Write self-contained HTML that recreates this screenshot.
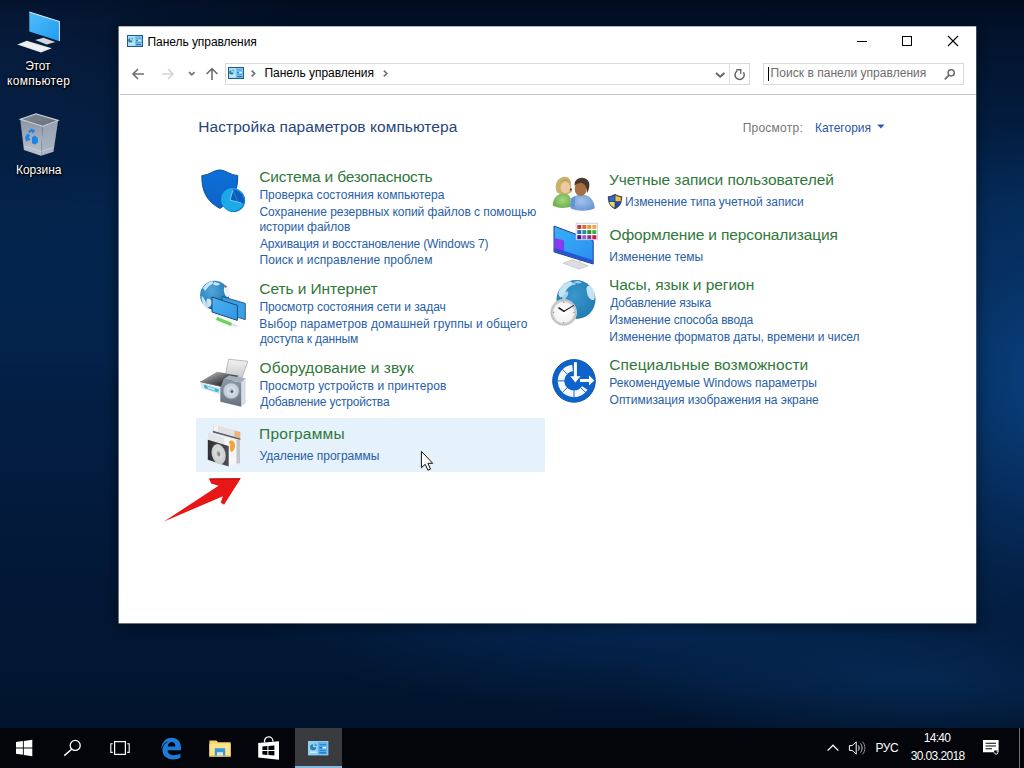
<!DOCTYPE html>
<html lang="ru">
<head>
<meta charset="utf-8">
<title>Панель управления</title>
<style>
*{box-sizing:border-box;margin:0;padding:0}
html,body{width:1024px;height:768px;overflow:hidden}
body{position:relative;font-family:"Liberation Sans",sans-serif;font-size:12px;color:#000;background:#06193a}
.a{position:absolute}
.t{position:absolute;white-space:nowrap;line-height:1}
svg{position:absolute;overflow:visible}
#desk{position:absolute;left:0;top:0;width:1024px;height:768px;
background:
radial-gradient(ellipse 300px 200px at 10px 70px, rgba(9,34,72,.6), rgba(7,30,66,.3) 55%, rgba(5,26,58,0) 100%),
radial-gradient(ellipse 240px 260px at 1055px 385px, rgba(10,68,132,.92), rgba(8,56,112,.55) 52%, rgba(5,40,86,0) 100%),
radial-gradient(ellipse 300px 70px at 920px 680px, rgba(8,54,108,.55), rgba(6,46,96,0) 100%),
radial-gradient(ellipse 400px 95px at 660px 618px, rgba(5,46,98,.7), rgba(4,38,82,0) 100%),
linear-gradient(180deg,#020c1f 0px,#02122a 30px,#031b3c 110px,#03254e 210px,#03234b 350px,#031e43 395px,#031a3b 520px,#02152f 700px,#02122a 768px)}
#win{position:absolute;left:118px;top:26px;width:858px;height:597px;background:#fff;
border:1px solid #49688f;box-shadow:0 5px 20px rgba(0,0,0,.42)}
#sep{position:absolute;left:120px;top:94px;width:856px;height:1px;background:#c6c6c6}
.box{position:absolute;border:1px solid #d9d9d9;background:#fff}
#hl{position:absolute;left:196px;top:418px;width:349px;height:54px;background:#e5f1fb}
#task{position:absolute;left:0;top:728px;width:1024px;height:40px;background:#03050a}
#act{position:absolute;left:295px;top:728px;width:47px;height:40px;background:#393b3e}
#actl{position:absolute;left:295px;top:766px;width:47px;height:2px;background:#86b9e2}
.dl{color:#fff;text-shadow:0 1px 2px #000,0 0 3px #000,1px 1px 1px #000}

</style>
</head>
<body>
<div id="desk"></div>
<svg id="dicons" style="left:0;top:0" width="1024" height="768">
<defs>
<linearGradient id="gPc" x1="0" y1="0" x2="1" y2="1"><stop offset="0" stop-color="#52bdf8"/><stop offset="1" stop-color="#1e9cf0"/></linearGradient>
<linearGradient id="gBinL" x1="0" y1="0" x2="0" y2="1"><stop offset="0" stop-color="#8995a7"/><stop offset="1" stop-color="#bcc3ce"/></linearGradient>
<linearGradient id="gBinR" x1="0" y1="0" x2="0" y2="1"><stop offset="0" stop-color="#97a2b3"/><stop offset="1" stop-color="#adb5c1"/></linearGradient>
<linearGradient id="gBinT" x1="0" y1="0" x2="1" y2="1"><stop offset="0" stop-color="#838b96"/><stop offset="1" stop-color="#656d78"/></linearGradient>
<filter id="db"><feGaussianBlur stdDeviation="0.35"/></filter>
</defs>
<!-- This PC -->
<g filter="url(#db)">
<path d="M28.500 11.400L60.300 21.300V41.800L28.500 31.800Z" fill="#0a1526" opacity=".55"/>
<path d="M29.300 12L59.750 21.600V41.200L29.300 31.600Z" fill="url(#gPc)"/>
<path d="M29.300 12L59.750 21.600" stroke="#dff1fc" stroke-width="1"/>
<path d="M59.400 21.600V41" stroke="#cfe6f6" stroke-width="1"/>
<path d="M35.200 39.900L43.500 37.800L55.200 42L46.800 44.500Z" fill="#d2d6de"/>
<path d="M17.250 44.500L26.800 40.750L51.800 48.250L41 52.400Z" fill="#e6e8ec"/>
<path d="M21 44.600L27 42.400L48 48.600L41.200 51Z" fill="#f4f5f7" opacity=".7"/>
</g>
<!-- Recycle bin -->
<g filter="url(#db)">
<path d="M20.200 119.200L42.700 126.250L41 155.800L23.900 150Z" fill="url(#gBinL)"/>
<path d="M42.700 126.250L58.100 120.400L53.500 151.700L41 155.800Z" fill="url(#gBinR)"/>
<path d="M20.200 119.200L36 113.750L58.100 120.400L42.700 126.250Z" fill="url(#gBinT)" stroke="#cfd4dc" stroke-width="1.100"/>
<path d="M24.500 146L41.200 151.500L53 147.600" fill="none" stroke="#d9dde3" stroke-width="1" opacity=".6"/>
<g fill="#1c84e4">
<path d="M28.300 131.200L31.600 128.400L35.200 130.600L33 133.400L31 131.600L29.600 133.400Z"/>
<path d="M25 137.200L27.400 133.400L30 135.200L28.600 137.600L30.600 139.600L26.200 141.400Z"/>
<path d="M32 143.200V137.400L34.600 135.200L37.800 138.200L38 142.600L34.800 144.400Z"/>
</g>
</g>
</svg>
<svg id="winsvg" style="left:0;top:0" width="1024" height="768"><defs><filter id="wsh" x="-5%" y="-5%" width="110%" height="112%"><feGaussianBlur stdDeviation="6"/></filter></defs><rect x="116" y="27" width="862" height="600" fill="#000" opacity=".38" filter="url(#wsh)"/><rect x="118.600" y="26.300" width="857.650" height="597.100" fill="#fff"/></svg>
<div id="sep"></div>
<div class="box" style="left:225px;top:63px;width:525px;height:22px"></div>
<div class="a" style="left:729px;top:64px;width:1px;height:20px;background:#e2e2e2"></div>
<div class="box" style="left:763px;top:63px;width:201px;height:22px"></div>
<div class="a" style="left:768px;top:67px;width:1px;height:14px;background:#000"></div>
<div id="hl"></div>
<svg id="chrome" style="left:0;top:0" width="1024" height="768">
<defs>
<g id="cpi">
 <rect x="0.5" y="0.5" width="15" height="11" fill="#a9def3" stroke="#1d5c8e" stroke-width="1"/>
 <rect x="8" y="1" width="7" height="10" fill="#7cc6f2"/>
 <path d="M3.2 3.2a2.2 2.2 0 1 0 2.3 2.2h-2.3z" fill="#2f7d9d"/>
 <path d="M4.6 2.4a2 2 0 0 1 1.8 1.9h-1.8z" fill="#4b96b2"/>
 <rect x="2" y="8.4" width="5" height="1" fill="#d9f3fb"/>
 <rect x="9" y="2.5" width="5" height="1" fill="#4a9fdc"/>
 <rect x="9" y="4.8" width="2" height="1.4" fill="#2c7fc4"/>
 <rect x="11.2" y="4.9" width="2.6" height="1.2" fill="#eaf8ff"/>
 <rect x="9" y="7" width="5" height="1" fill="#4a9fdc"/>
 <rect x="9" y="9" width="5" height="1.1" fill="#2470b4"/>
</g>
</defs>
<!-- title icon -->
<use href="#cpi" x="127" y="35"/>
<!-- window buttons -->
<path d="M857 41.5h10" stroke="#000" stroke-width="1"/>
<rect x="902.5" y="36.5" width="9" height="9" fill="none" stroke="#000" stroke-width="1"/>
<path d="M948 36l10 10M958 36l-10 10" stroke="#000" stroke-width="1.1"/>
<!-- nav: back -->
<path d="M144 74h-11M138 69l-5 5 5 5" fill="none" stroke="#6f6f6f" stroke-width="1.6"/>
<!-- forward (disabled) -->
<path d="M162 74h11M168 69l5 5-5 5" fill="none" stroke="#d4d4d4" stroke-width="1.6"/>
<!-- small chevron -->
<path d="M189 72.200l2.800 2.700 2.800-2.700" fill="none" stroke="#727272" stroke-width="1.700"/>
<!-- up -->
<path d="M212 80v-11M206.6 74l5.4-5.4 5.4 5.4" fill="none" stroke="#6f6f6f" stroke-width="1.6"/>
<!-- address icon -->
<use href="#cpi" x="228" y="67"/>
<path d="M251.600 70.700l3 2.800-3 2.800" fill="none" stroke="#727272" stroke-width="1.700"/>
<path d="M383.800 70.700l3 2.800-3 2.800" fill="none" stroke="#727272" stroke-width="1.700"/>
<!-- address dropdown -->
<path d="M716 72.900l4.200 3.800 4.200-3.800" fill="none" stroke="#666" stroke-width="2"/>
<!-- refresh -->
<path d="M743.400 72.200A4.600 4.600 0 1 1 737.300 70.900" fill="none" stroke="#666" stroke-width="1.500"/>
<path d="M736.200 69.700H740.800V73.700" fill="none" stroke="#666" stroke-width="1.400"/>
<!-- search magnifier -->
<circle cx="951.2" cy="72.8" r="3.1" fill="none" stroke="#6a6a6a" stroke-width="1.5"/>
<path d="M949 75.2l-4.2 4.2" stroke="#6a6a6a" stroke-width="1.8"/>
<!-- category triangle -->
<path d="M877.3 124.6h7.2l-3.6 3.8z" fill="#2858a8"/>
</svg>
<div id="task"></div>
<div id="act"></div><div id="actl"></div>
<div id="ttl" class="t" style="left:147.55px;top:35.84px;font-size:12px;color:#000;letter-spacing:-0.063px">Панель управления</div>
<div id="adr" class="t" style="left:264.55px;top:67.04px;font-size:12px;color:#000;letter-spacing:-0.048px">Панель управления</div>
<div id="srch" class="t" style="left:770.60px;top:67.04px;font-size:12px;color:#6d6d6d;letter-spacing:0.035px">Поиск в панели управления</div>
<div id="head" class="t" style="left:198.31px;top:118.88px;font-size:15.5px;color:#27457c;letter-spacing:0.057px">Настройка параметров компьютера</div>
<div id="view" class="t" style="left:742.63px;top:122.44px;font-size:12px;color:#767676;letter-spacing:0.246px">Просмотр:</div>
<div id="cat" class="t" style="left:814.93px;top:122.44px;font-size:12px;color:#2858a8">Категория</div>
<div id="h1" class="t" style="left:259.30px;top:168.88px;font-size:15.5px;color:#30783a;letter-spacing:-0.177px">Система и безопасность</div>
<div id="l11" class="t" style="left:259.42px;top:188.84px;font-size:12px;color:#2860a6;letter-spacing:0.005px">Проверка состояния компьютера</div>
<div id="l12" class="t" style="left:259.48px;top:205.84px;font-size:12px;color:#2860a6;letter-spacing:-0.043px">Сохранение резервных копий файлов с помощью</div>
<div id="l13" class="t" style="left:259.38px;top:221.04px;font-size:12px;color:#2860a6;letter-spacing:-0.053px">истории файлов</div>
<div id="l14" class="t" style="left:259.95px;top:237.84px;font-size:12px;color:#2860a6;letter-spacing:-0.136px">Архивация и восстановление (Windows 7)</div>
<div id="l15" class="t" style="left:259.42px;top:253.84px;font-size:12px;color:#2860a6;letter-spacing:0.100px">Поиск и исправление проблем</div>
<div id="h2" class="t" style="left:259.30px;top:280.88px;font-size:15.5px;color:#30783a;letter-spacing:-0.076px">Сеть и Интернет</div>
<div id="l21" class="t" style="left:259.42px;top:300.84px;font-size:12px;color:#2860a6;letter-spacing:-0.067px">Просмотр состояния сети и задач</div>
<div id="l22" class="t" style="left:259.35px;top:317.84px;font-size:12px;color:#2860a6;letter-spacing:0.103px">Выбор параметров домашней группы и общего</div>
<div id="l23" class="t" style="left:259.96px;top:333.04px;font-size:12px;color:#2860a6;letter-spacing:-0.124px">доступа к данным</div>
<div id="h3" class="t" style="left:259.51px;top:360.48px;font-size:15.5px;color:#30783a;letter-spacing:0.112px">Оборудование и звук</div>
<div id="l31" class="t" style="left:259.42px;top:379.64px;font-size:12px;color:#2860a6;letter-spacing:0.065px">Просмотр устройств и принтеров</div>
<div id="l32" class="t" style="left:260.18px;top:396.04px;font-size:12px;color:#2860a6;letter-spacing:-0.186px">Добавление устройства</div>
<div id="h4" class="t" style="left:259.07px;top:426.28px;font-size:15.5px;color:#30783a;letter-spacing:0.228px">Программы</div>
<div id="l41" class="t" style="left:259.57px;top:450.24px;font-size:12px;color:#2860a6;letter-spacing:-0.017px">Удаление программы</div>
<div id="r1" class="t" style="left:609.00px;top:171.88px;font-size:15.5px;color:#30783a;letter-spacing:-0.052px">Учетные записи пользователей</div>
<div id="r11" class="t" style="left:625.11px;top:195.74px;font-size:12px;color:#2860a6;letter-spacing:-0.044px">Изменение типа учетной записи</div>
<div id="r2" class="t" style="left:609.51px;top:227.08px;font-size:15.5px;color:#30783a;letter-spacing:-0.150px">Оформление и персонализация</div>
<div id="r21" class="t" style="left:609.35px;top:250.54px;font-size:12px;color:#2860a6;letter-spacing:-0.061px">Изменение темы</div>
<div id="r3" class="t" style="left:608.93px;top:276.78px;font-size:15.5px;color:#30783a;letter-spacing:-0.033px">Часы, язык и регион</div>
<div id="r31" class="t" style="left:610.18px;top:296.84px;font-size:12px;color:#2860a6;letter-spacing:-0.212px">Добавление языка</div>
<div id="r32" class="t" style="left:609.35px;top:314.04px;font-size:12px;color:#2860a6;letter-spacing:-0.138px">Изменение способа ввода</div>
<div id="r33" class="t" style="left:609.35px;top:331.14px;font-size:12px;color:#2860a6;letter-spacing:-0.074px">Изменение форматов даты, времени и чисел</div>
<div id="r4" class="t" style="left:609.30px;top:357.48px;font-size:15.5px;color:#30783a;letter-spacing:0.049px">Специальные возможности</div>
<div id="r41" class="t" style="left:609.35px;top:376.54px;font-size:12px;color:#2860a6;letter-spacing:-0.021px">Рекомендуемые Windows параметры</div>
<div id="r42" class="t" style="left:609.60px;top:393.54px;font-size:12px;color:#2860a6;letter-spacing:-0.031px">Оптимизация изображения на экране</div>
<div id="d1" class="t dl" style="left:25.13px;top:59.84px;font-size:12px;color:#fff;letter-spacing:-0.152px">Этот</div>
<div id="d2" class="t dl" style="left:7.10px;top:74.84px;font-size:12px;color:#fff;letter-spacing:0.289px">компьютер</div>
<div id="d3" class="t dl" style="left:15.93px;top:163.84px;font-size:12px;color:#fff;letter-spacing:-0.019px">Корзина</div>
<div id="tl" class="t" style="left:875.39px;top:741.84px;font-size:12px;color:#fff;letter-spacing:-0.322px">РУС</div>
<div id="tt" class="t" style="left:923.83px;top:732.14px;font-size:12px;color:#fff;letter-spacing:-0.738px">14:40</div>
<div id="td" class="t" style="left:910.71px;top:750.04px;font-size:12px;color:#fff;letter-spacing:-0.610px">30.03.2018</div>
<svg id="icons" style="left:0;top:0" width="1024" height="768">
<defs>
<linearGradient id="gShield" x1="0" y1="0" x2="0" y2="1"><stop offset="0" stop-color="#0d6fd8"/><stop offset="1" stop-color="#0a62c8"/></linearGradient>
<radialGradient id="gGlobe" cx=".4" cy=".35" r=".7"><stop offset="0" stop-color="#4fa9dc"/><stop offset="1" stop-color="#1d6ea9"/></radialGradient>
<linearGradient id="gMon" x1="0" y1="0" x2="1" y2="1"><stop offset="0" stop-color="#4cb2f2"/><stop offset="1" stop-color="#2f97e2"/></linearGradient>
<linearGradient id="gPaper" x1="0" y1="0" x2="0" y2="1"><stop offset="0" stop-color="#f2f2f2"/><stop offset="1" stop-color="#c9cbcc"/></linearGradient>
<linearGradient id="gPrTop" x1="0" y1="0" x2="1" y2="1"><stop offset="0" stop-color="#e2e2e2"/><stop offset=".35" stop-color="#7c7f82"/><stop offset=".7" stop-color="#303235"/><stop offset="1" stop-color="#56595c"/></linearGradient>
<linearGradient id="gSpk" x1="0" y1="0" x2="0" y2="1"><stop offset="0" stop-color="#8b98a6"/><stop offset="1" stop-color="#66727f"/></linearGradient>
<radialGradient id="gCone" cx=".5" cy=".5" r=".5"><stop offset="0" stop-color="#aab6c6"/><stop offset=".55" stop-color="#dfe6ef"/><stop offset="1" stop-color="#b9c4d2"/></radialGradient>
<linearGradient id="gCase" x1="0" y1="0" x2="1" y2="0"><stop offset="0" stop-color="#2f3136"/><stop offset="1" stop-color="#4b4e55"/></linearGradient>
<radialGradient id="gDisc" cx=".5" cy=".45" r=".6"><stop offset="0" stop-color="#9a9a9a"/><stop offset=".3" stop-color="#dcdcdc"/><stop offset="1" stop-color="#c2c4c6"/></radialGradient>
<linearGradient id="gScr" x1="0" y1="0" x2="1" y2="1"><stop offset="0" stop-color="#38b0f6"/><stop offset="1" stop-color="#2a8df0"/></linearGradient>
<linearGradient id="gPurp" x1="0" y1="0" x2="1" y2="0"><stop offset="0" stop-color="#7a3cf0"/><stop offset=".6" stop-color="#a032f0"/><stop offset="1" stop-color="#5a4cf0"/></linearGradient>
<radialGradient id="gGlobe2" cx=".45" cy=".4" r=".7"><stop offset="0" stop-color="#3a98cc"/><stop offset="1" stop-color="#1f77ad"/></radialGradient>
<radialGradient id="gClk" cx=".5" cy=".5" r=".5"><stop offset="0" stop-color="#ffffff"/><stop offset=".8" stop-color="#f2f2f2"/><stop offset="1" stop-color="#b5b8bb"/></radialGradient>
<radialGradient id="gW" cx=".55" cy=".45" r=".7"><stop offset="0" stop-color="#a9d680"/><stop offset="1" stop-color="#5fa545"/></radialGradient><radialGradient id="gM" cx=".45" cy=".4" r=".75"><stop offset="0" stop-color="#a4c3ec"/><stop offset="1" stop-color="#5a8dd0"/></radialGradient><filter id="b3"><feGaussianBlur stdDeviation="0.35"/></filter>
<filter id="b6"><feGaussianBlur stdDeviation="0.7"/></filter>
</defs>

<!-- 1. System and security -->
<g filter="url(#b3)">
<path d="M219.8 169.9C213.5 170 209.5 175.2 201.9 175.6C201.5 190 206 201 219.8 208.4C233.5 201 238 190 237.7 175.6C230 175.2 226 170 219.8 169.9Z" fill="url(#gShield)" stroke="#0b4d9e" stroke-width="1"/>
<circle cx="233.5" cy="200.4" r="11.7" fill="#0d7fd2"/>
<circle cx="232.7" cy="199.5" r="11.6" fill="#1fa9e7"/>
<path d="M232.9 189.2L230 200.2L243.8 203.4A11.7 11.7 0 0 0 232.9 189.2Z" fill="#0e5dbe"/>
<path d="M232.9 190L230 200.2L241 202.8" fill="none" stroke="#7fd6f8" stroke-width=".9"/>
<path d="M232.9 190L237.8 202" fill="none" stroke="#2f8fe0" stroke-width=".7"/>
</g>

<!-- 2. Network and Internet -->
<g filter="url(#b3)">
<circle cx="214.6" cy="295.2" r="14.5" fill="url(#gGlobe)"/>
<path d="M203 288c2-3 5-6 9-7 2 1 1 3-1 4-3 1-4 4-6 6zM214 282c3 0 5 1 6 2-2 2-5 2-7 0zM201.500 296c2 1 4 4 5 8 1 3 3 4 2 6-4-2-7-7-7-14z" fill="#d8eefa" opacity=".9"/>
<path d="M207 299c2-1 4 0 5 3 0 3-2 5-4 5-2-2-2-6-1-8z" fill="#e9f5fc" opacity=".85"/>
<ellipse cx="226.800" cy="291.500" rx="2.800" ry="5.600" fill="#eef1f4" transform="rotate(-12 226.800 291.500)"/>
<circle cx="225.800" cy="286.600" r="1.100" fill="#b8504a"/>
<path d="M222 296.500L245.300 303.400V319.600L222 312.600Z" fill="#3a9fe6" stroke="#1d4f7e" stroke-width=".9"/>
<path d="M212 297L237.400 305.400V320.400L212 312Z" fill="url(#gMon)" stroke="#1b4a78" stroke-width="1"/>
<path d="M217 316.800L232.300 323L231.300 326.200L216 320Z" fill="#6fd15f"/>
<path d="M232 322.800L238 325.200L237 327.600L231.200 325.600Z" fill="#e3e6e8"/>
<path d="M212.500 313.500L220 316.200" stroke="#dfe8ee" stroke-width="1.200"/>
</g>

<!-- 3. Hardware and sound -->
<g filter="url(#b3)">
<path d="M228.700 359.200L247.800 361.300L242 377.800L225.300 375.200Z" fill="url(#gPaper)" stroke="#a9acae" stroke-width=".8"/>
<path d="M200.300 381.700L217 371.700L238.700 375.800L222.800 386.900Z" fill="url(#gPrTop)"/>
<path d="M200.300 382.200L221.500 388.600L220 394.400L201 388Z" fill="#dfeaf0"/>
<path d="M203.500 384.500L219 389.200L218.200 392.400L204.500 388.200Z" fill="#3fb6d8"/>
<path d="M207 386.300L215 388.700L214.600 390.600L208 388.500Z" fill="#bdeaf6"/>
<path d="M200.300 381.700L222.800 386.900" stroke="#6b6e71" stroke-width="1"/>
<path d="M241.200 382.500L245.600 378.300V403.300L241.200 406.700Z" fill="#d3dde8"/>
<path d="M223.700 379L241.200 382.500V406.700L220.300 401.700V388Z" fill="url(#gSpk)"/>
<path d="M223.700 379L241.200 382.500L245.600 378.300L229 375.500Z" fill="#a2aeba"/>
<circle cx="231.200" cy="390.900" r="8" fill="url(#gCone)" stroke="#8e9aa8" stroke-width=".6"/>
<circle cx="231.200" cy="390.900" r="5.200" fill="none" stroke="#a9b5c4" stroke-width=".7"/>
<circle cx="232" cy="391.600" r="1.300" fill="#4e5864"/>
</g>

<!-- 4. Programs -->
<g filter="url(#b3)">
<path d="M212.800 424.400L240.300 431.900V438.400L212.800 430.800Z" fill="#dfe1e3"/>
<path d="M214 424.800L218 425.900V431.800L214 430.800Z" fill="#f3f3f3"/>
<path d="M234.500 430.400L240.300 431.900V438.400L234.500 436.800Z" fill="#efb27a"/>
<path d="M212.800 430.800L240.300 438.400V440L212.800 432.400Z" fill="#5a5c60"/>
<path d="M208.200 432.800L224.500 438L224.500 446L208.200 440.800Z" fill="#e3e4e6"/>
<path d="M224.500 438L236.500 439.600V463.600L228.700 466.500V446.100L224.500 444.800Z" fill="#f6f6f6"/>
<path d="M236.500 439.600L240 439.900V463.200L236.500 463.600Z" fill="#c3c5c8"/>
<path d="M229 441.500C231.500 439.500 234.800 441 235 445C235.200 448.500 233.500 451.500 231 452C229.500 450 229.800 447 230.500 445C229.500 444 229 442.800 229 441.500Z" fill="#f2a530"/>
<path d="M207.800 439.800L228.700 446.100V466.500L207.800 459.800Z" fill="url(#gCase)"/>
<ellipse cx="218.700" cy="454.200" rx="6.900" ry="10.300" fill="url(#gDisc)" transform="rotate(-14 218.700 454.200)"/>
<ellipse cx="218.700" cy="454.200" rx="1.500" ry="2.300" fill="#8d8f92" transform="rotate(-14 218.700 454.200)"/>
</g>

<!-- 5. User accounts -->
<g filter="url(#b3)">
<path d="M552.800 205.500C552.500 199.500 556 194.500 562 193.400C566 192.800 569.500 194.500 570.700 199V206.500C566 208.600 557 208.600 552.800 205.500Z" fill="url(#gW)"/>

<path d="M557 192.500C554.500 187 555.500 179.500 562 177.200C567.500 175.600 571.800 179.500 571 184.500C570.800 188 571.500 190.500 572 192L568 194H560Z" fill="#c9b36a"/>
<ellipse cx="565.400" cy="187.500" rx="4.700" ry="5.800" fill="#ecc9a2"/>
<path d="M560 183C562 180.500 566.500 179.500 570.500 182.500C569 178.500 562.500 177.500 560 183Z" fill="#b9a258"/>
<circle cx="570.900" cy="189.600" r="1.100" fill="#4b3a2c"/>
<path d="M570.500 208.300C569.500 201 572.500 195.600 579 194.700C587 193.800 594 198 594.800 208.300C590 211.600 575 211.600 570.500 208.300Z" fill="url(#gM)"/>
<path d="M570.700 198L575 196V207.500L570.700 206.500Z" fill="#5b8fcb" opacity=".8"/>
<ellipse cx="580.700" cy="188.800" rx="6" ry="7.300" fill="#a8703f"/>
<path d="M574.700 186C574 180.500 578 177.500 583 177.900C588 178.300 590.500 182.500 589 188C588.500 190 587.800 192 587 193C587 188 585.500 184.500 582 183C579 182.500 576.500 183.500 574.700 186Z" fill="#46382f"/>
</g>

<!-- 6. Appearance and personalization -->
<g filter="url(#b3)">
<path d="M563.200 263.200L572.300 259.800L588.200 265.700L579 269.100Z" fill="#dcdee1" stroke="#a8abaf" stroke-width=".5"/>
<path d="M578.800 259.500H580.800V265H578.800Z" fill="#d3d5d8"/>
<path d="M554 226.100L593.200 240.700V264L554 251.900Z" fill="url(#gScr)" stroke="#1c3c9c" stroke-width="1"/>
<path d="M554.600 238L564 240.500V252L554.600 249.400Z" fill="url(#gPurp)"/>
<path d="M554.600 248L592.600 260V263.300L554.600 251.400Z" fill="#2648c8" opacity=".85"/>
<rect x="576.100" y="223.200" width="21.200" height="16.600" fill="#fff" stroke="#b9bcc0" stroke-width=".7"/>
<g>
<rect x="577.300" y="225" width="4" height="3.900" fill="#b83a30"/><rect x="582.300" y="225" width="4" height="3.900" fill="#d86a38"/><rect x="587.300" y="225" width="4" height="3.900" fill="#e09a30"/><rect x="592.300" y="225" width="4" height="3.900" fill="#f4a446"/>
<rect x="577.300" y="230.100" width="4" height="3.900" fill="#2a6ab0"/><rect x="582.300" y="230.100" width="4" height="3.900" fill="#20909a"/><rect x="587.300" y="230.100" width="4" height="3.900" fill="#308a40"/><rect x="592.300" y="230.100" width="4" height="3.900" fill="#30b840"/>
<rect x="577.300" y="235.200" width="4" height="3.900" fill="#3a1a8a"/><rect x="582.300" y="235.200" width="4" height="3.900" fill="#9060d0"/><rect x="587.300" y="235.200" width="4" height="3.900" fill="#8a3090"/><rect x="592.300" y="235.200" width="4" height="3.900" fill="#c81850"/>
</g>
</g>

<!-- 7. Clock, language, region -->
<g filter="url(#b3)">
<circle cx="576" cy="299.600" r="19.500" fill="url(#gGlobe2)"/>
<path d="M559 291C561 286 565 282.500 570 281.200C572.500 282 573 284 571.500 285.500C569 286.500 567 288.500 566 291C564.500 293.500 563 296.500 560.500 297.500C558.500 296 558 293.500 559 291Z" fill="#d4ecf8" opacity=".92"/>
<path d="M586.500 288C588 284.500 591 285 593 288.500C595 292.500 595.500 297 594 300C591.500 300.500 588.500 298 587.500 294.500C587 292 586.200 290 586.500 288Z" fill="#d4ecf8" opacity=".92"/>
<path d="M569 283.500C571 282 574.500 282 576 283.500C575 285.500 571.500 286 569 283.500Z" fill="#bfe0f2" opacity=".8"/><path d="M562 296C563.500 293 566 291 568 291.500C569 293.500 567.500 296 566 298C565 300 563.500 300.500 562.500 299.500Z" fill="#cfe8f6" opacity=".75"/><path d="M574 281.500C577 280.500 580 281 582 282.500C580 284 576.500 284 574 281.500Z" fill="#cfe8f6" opacity=".7"/>
<circle cx="563.700" cy="312.400" r="13.300" fill="#c6c9cc"/>
<circle cx="563.700" cy="312.400" r="12.200" fill="url(#gClk)"/>
<path d="M564 311.300L559 308" stroke="#1e1e22" stroke-width="1.500" stroke-linecap="round"/>
<path d="M564 311.300L573.500 305.600" stroke="#1e1e22" stroke-width="1.100" stroke-linecap="round"/>
<g fill="#8b8e92"><circle cx="563.700" cy="302.200" r=".7"/><circle cx="563.700" cy="322.600" r=".7"/><circle cx="553.500" cy="312.400" r=".7"/><circle cx="573.900" cy="312.400" r=".7"/></g>
</g>

<!-- 8. Ease of access -->
<g filter="url(#b3)">
<circle cx="574" cy="380.900" r="21.300" fill="#0b64cb" stroke="#0a51ad" stroke-width="1"/>
<path d="M572.200 364.750A16.250 16.250 0 1 0 587.600 389.800L582.100 386.300A9.700 9.700 0 1 1 572.900 371.250Z" fill="#f3f8fd"/>
<g stroke="#0b55b6" stroke-width=".9">
<path d="M557.500 380.900H565"/><path d="M574 390.400V397.500"/>
<path d="M562.300 369.200L567.300 374.200"/><path d="M562.300 392.600L567.300 387.600"/><path d="M580.700 387.600L585.700 392.600"/>
</g>
<path d="M573.900 362.200H576.900V376.300H580.500L575.400 382.400L570.300 376.300H573.900Z" fill="#fff"/>
<path d="M580 379H589V375.600L594.300 380.500L589 385.400V382H580Z" fill="#fff"/>
</g>

<!-- UAC shield -->
<g filter="url(#b3)">
<path d="M615 194.200C612.800 195.800 610.500 196.500 608.300 196.600C608.200 202.500 610 206.500 615 208.800C620 206.500 621.800 202.500 621.700 196.600C619.500 196.500 617.200 195.800 615 194.200Z" fill="#233a7a" stroke="#3b3226" stroke-width=".8"/>
<path d="M614.600 195.300C612.800 196.500 611 197.100 609.200 197.300V201.300H614.600Z" fill="#2a6ad6"/>
<path d="M615.400 195.300C617.200 196.500 619 197.100 620.800 197.300V201.300H615.400Z" fill="#f2c232"/>
<path d="M609.300 202.100H614.600V207.700C611.500 206.300 609.800 204.500 609.300 202.100Z" fill="#e9e062"/>
<path d="M615.400 202.100H620.700C620.200 204.500 618.500 206.300 615.400 207.700Z" fill="#2745b5"/>
</g>
</svg>
<svg id="tb" style="left:0;top:0" width="1024" height="768">
<!-- start -->
<g fill="#fff">
<path d="M16 742.100L22.900 741.100V747.500H16Z"/><path d="M23.800 741L32.300 739.700V747.500H23.800Z"/>
<path d="M16 748.400H22.900V754.800L16 753.800Z"/><path d="M23.800 748.400H32.300V756.200L23.800 754.900Z"/>
</g>
<!-- search -->
<circle cx="75.200" cy="745.400" r="5" fill="none" stroke="#fff" stroke-width="1.300"/>
<path d="M71.600 749.200L64.300 755.600" stroke="#fff" stroke-width="1.500"/>
<!-- task view -->
<rect x="114.600" y="741.600" width="10.800" height="12.800" fill="none" stroke="#fff" stroke-width="1.200"/>
<path d="M112.800 743.800H110.800V752.400H112.800M127.200 743.800H129.200V752.400H127.200" fill="none" stroke="#fff" stroke-width="1.100"/>
<!-- edge -->
<path d="M161.400 749.200C161.200 742.600 165.800 737.800 171.600 737.800C177.600 737.800 181 742 181 747.600V750.200H167.600C167.800 753.400 170.600 755.200 174 755.200C176.400 755.200 178.600 754.600 180.400 753.600V757.800C178.400 758.800 176 759.400 173.200 759.400C166.600 759.400 162.200 755.400 162.400 749.200C162.800 745.600 165.400 742.800 168.600 741.600C165 742.200 162.400 745 161.400 749.200ZM167.800 746.400H175.400C175.400 743.800 174 742 171.600 742C169.400 742 168 743.800 167.800 746.400Z" fill="#1e7cd8" fill-rule="evenodd"/>
<!-- explorer -->
<path d="M209.400 740.400H216.400L218 742.200H230.600V756.400H209.400Z" fill="#f5d26a"/>
<path d="M209.400 743.600H230.600V756.400H209.400Z" fill="#fbe38e"/>
<path d="M214.800 748.200H225.200V756.400H214.800Z" fill="#3b98d6"/>
<path d="M217 752.200H223V756.400H217Z" fill="#cfe6f6"/>
<path d="M209.400 755.400H230.600V756.600H209.400Z" fill="#e0b84c"/>
<!-- store -->
<path d="M258.200 743L279 741.200V759.800L258.200 757.600Z" fill="#fff"/>
<path d="M264.400 742.400C264.400 738.600 266.600 736.800 268.800 736.800C271 736.800 273 738.600 273 741.600" fill="none" stroke="#fff" stroke-width="1.300"/>
<g fill="#03050a"><path d="M262.400 746.400L267.400 746V750H262.400Z"/><path d="M268.400 745.900L274.400 745.400V750H268.400Z"/><path d="M262.400 751H267.400V755L262.400 754.600Z"/><path d="M268.400 751H274.400V755.600L268.400 755.100Z"/></g>
<!-- control panel (active) -->
<g>
<rect x="308" y="741" width="20.400" height="14.400" fill="#8fd0f4"/>
<rect x="318" y="742" width="9.400" height="12.400" fill="#5db4ee"/>
<path d="M313 744.200a3 3 0 1 0 3.100 3h-3.100z" fill="#2d7ea6"/>
<path d="M314.600 743.200a2.700 2.700 0 0 1 2.500 2.600h-2.500z" fill="#4a94b4"/>
<rect x="310" y="751.600" width="6.400" height="1.200" fill="#e4f6fd"/>
<rect x="319.400" y="744" width="6.600" height="1.300" fill="#2e86cc"/>
<rect x="319.400" y="746.800" width="2.800" height="1.700" fill="#2470b8"/><rect x="322.800" y="746.900" width="3.200" height="1.500" fill="#f2fbff"/>
<rect x="319.400" y="749.800" width="6.600" height="1.300" fill="#2e86cc"/>
<rect x="319.400" y="752.200" width="6.600" height="1.300" fill="#2470b8"/>
</g>
<!-- tray chevron -->
<path d="M827.600 750.600L833 745.200L838.400 750.600" fill="none" stroke="#fff" stroke-width="1.300"/>
<!-- speaker -->
<path d="M849.400 745.600H852.200L856.200 741.800V754.200L852.200 750.400H849.400Z" fill="none" stroke="#fff" stroke-width="1"/>
<path d="M858.200 745.400C859.400 746.800 859.400 749.200 858.200 750.600" fill="none" stroke="#fff" stroke-width="1"/>
<path d="M860.400 743.400C862.600 746 862.600 750 860.400 752.600" fill="none" stroke="#d0d0d0" stroke-width="1"/>
<path d="M862.600 741.600C865.600 745.200 865.600 750.800 862.600 754.400" fill="none" stroke="#8a8a8a" stroke-width="1"/>
<!-- action center -->
<path d="M983 740H998.600V752.200H996.400L996.400 755L993.200 752.200H983Z" fill="#fff"/>
<path d="M985.600 743.200H996M985.600 746H996M985.600 748.800H992" stroke="#03050a" stroke-width="1.100"/>
<circle cx="996" cy="752.600" r="2.300" fill="#03050a"/>
<path d="M994.600 752.400A1.600 1.600 0 1 0 996.400 751" fill="none" stroke="#fff" stroke-width=".9"/>
<!-- show desktop -->
<path d="M1019.500 728V768" stroke="#6e6e6e" stroke-width="1"/>
</svg>
<svg id="ov" style="left:0;top:0" width="1024" height="768">
<defs><filter id="ob"><feGaussianBlur stdDeviation="0.3"/></filter></defs>
<path d="M164 521.500L218.600 485.800L211.200 483.600L209 478.600L240.800 478.300L224 504.800L220.800 502.600L222.900 496.200Z" fill="#e81212" filter="url(#ob)"/>
<path d="M209.600 479L240 478.700" stroke="#a30c0c" stroke-width=".8" filter="url(#ob)"/>
<path d="M421.400 451.300V467.800L425.200 464.300L427.900 470.200L430.500 469.100L427.900 463.300H432.700Z" fill="#fff" stroke="#111" stroke-width="1" stroke-linejoin="miter"/>
</svg>
</body>
</html>
